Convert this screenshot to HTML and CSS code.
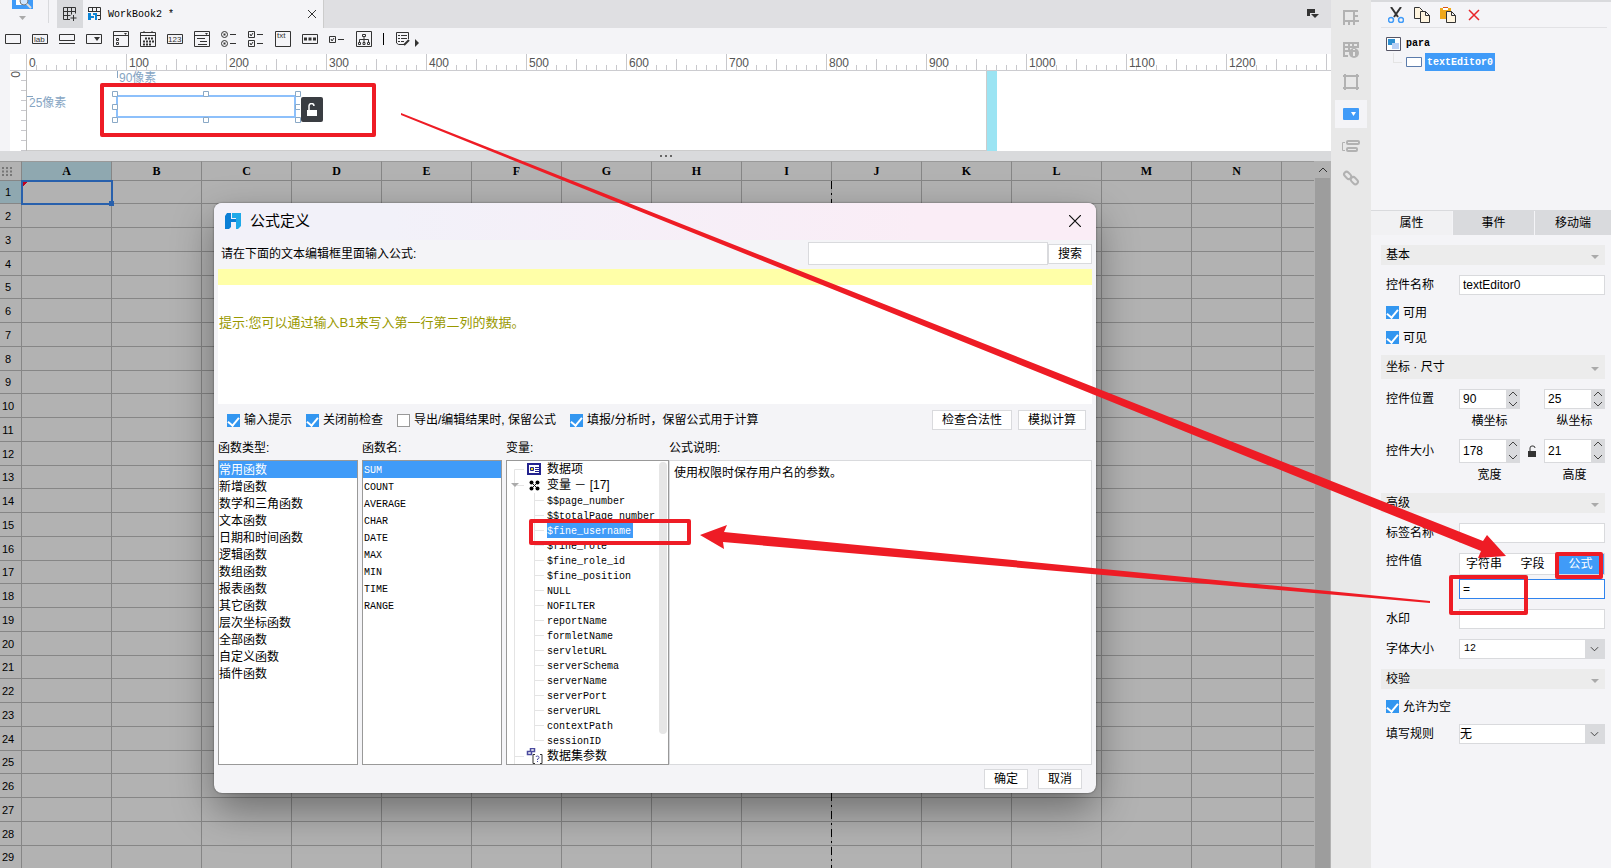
FILE: index.html
```html
<!DOCTYPE html>
<html lang="zh-CN">
<head>
	<meta charset="UTF-8">
	<title>WorkBook2</title>

	<link rel="stylesheet" href="styles.css">
</head>
<body>

	<div class="app">

		<main class="main">
			<div class="topbar">
				<div class="preview">
					<button class="preview-btn" aria-label="预览">
						<svg width="21" height="9" viewBox="0 0 21 9"><rect width="21" height="9" fill="#409bf8"/><rect x="4" width="11" height="5" fill="#fff"/><circle cx="12" cy="1" r="4" fill="#cfe6ff" stroke="#777" /><path d="M15 4l4 4" stroke="#ddd" stroke-width="2"/></svg>
						<svg width="7" height="4" viewBox="0 0 7 4"><path d="M0 0h7L3.500 4z" fill="#aaa"/></svg>
					</button>
				</div>
				<button class="new-tab" aria-label="新建">
					<svg width="14" height="14" viewBox="0 0 14 14" fill="none" stroke="#333"><path d="M7 12.500H.5V.5h12v6M.5 4.500h12M.5 8.500h7M4.500.5v12M8.500.5v7M10.500 8v6M7.500 11h6"/></svg>
				</button>
				<div class="tab">
					<svg width="14" height="14" viewBox="0 0 14 14" fill="none"><path d="M.5 5V.5h12v12H10M.5 4.500h12M4.500.5v4M8.500.5v4M9 8.500h4" stroke="#333"/><path d="M0 6h3v3h3v2H3v2H0zM5 6h4v7H7V8H5z" fill="#0a84d6"/></svg>
					<span class="tab-name">WorkBook2 *</span>
					<button class="tab-close" aria-label="关闭">
						<svg width="8" height="8" viewBox="0 0 8 8"><path d="M0 0l8 8M8 0L0 8" stroke="#333"/></svg>
					</button>
				</div>
				<button class="tab-list" aria-label="标签列表">
					<svg width="12" height="10" viewBox="0 0 12 10"><path d="M0 0h8v4H3v3H0z" fill="#333"/><path d="M4 5h8L8 9z" fill="#333"/></svg>
				</button>
			</div>

			<div class="toolbar">
				<svg viewBox="0 0 16 16"><path d="M.5 3.500h15v9H.5z"/></svg>
				<svg viewBox="0 0 16 16"><path d="M.5 3.500h15v9H.5z"/><text x="2" y="11">lab</text></svg>
				<svg viewBox="0 0 16 16"><path d="M.5 3.500h15v6H.5zM0 12.500h16"/></svg>
				<svg viewBox="0 0 16 16"><path d="M.5 3.500h15v9H.5z"/><path class="solid" d="M8 6h6l-3 4z"/></svg>
				<svg viewBox="0 0 16 16"><path d="M.5.5h15v15H.5zM.5 4.500h15M3.500 7.500h2v2h-2zM3.500 11.500h2v2h-2z"/><path class="solid" d="M11 2h3l-1.500 2z"/></svg>
				<svg viewBox="0 0 16 16"><path d="M.5 1.500h15v14H.5zM.5 4.500h15M4 0v2M12 0v2"/><path d="M5 7.500h9M3 10.500h11M3 13.500h8" stroke-width="2" stroke-dasharray="2 1"/></svg>
				<svg viewBox="0 0 16 16"><path d="M.5 3.500h15v9H.5z"/><text x="1" y="11">123</text></svg>
				<svg viewBox="0 0 16 16"><path d="M.5.5h15v15H.5zM.5 4.500h15M3 7.500h8M6 10.500h7M4 13.500h9"/><path class="solid" d="M11 2h3l-1.500 2z"/></svg>
				<svg viewBox="0 0 16 16"><circle cx="3.500" cy="3.500" r="3"/><circle cx="3.500" cy="12.500" r="3"/><path d="M9 3.500h6M9 12.500h6"/><path d="M2.500 3.500h2M2.500 12.500h2" stroke-width="2"/></svg>
				<svg viewBox="0 0 16 16"><path d="M.5.5h6v6h-6zM.5 9.500h6v6h-6zM9 3.500h6M9 12.500h6M2 3l1 2 2-3M2 12l1 2 2-3"/></svg>
				<svg viewBox="0 0 16 16"><path d="M.5.5h15v15H.5z"/><text x="2" y="7">txt</text></svg>
				<svg viewBox="0 0 16 16"><path d="M.5 3.500h15v9H.5z"/><path d="M2 8h12" stroke-width="3" stroke-dasharray="3 1.500"/></svg>
				<svg viewBox="0 0 16 16"><path d="M.5 5.500h6v6h-6zM9 8.500h6M2 8l1 2 2-3"/></svg>
				<svg viewBox="0 0 16 16"><path d="M.5.5h15v15H.5zM6.500 3.500h3v2h-3zM8 6v5M3.500 11V8.500h9V11M2.500 11.500h2v2h-2zM7 11.500h2v2H7zM11.500 11.500h2v2h-2z"/></svg>
				<span class="toolbar-sep"></span>
				<svg viewBox="0 0 16 16"><path d="M9 13.500H3.500L1.500 12V1.500h12V8M6 4.500h6M6 7.500h6M6 10.500h3M3 4.500h2M3 7.500h2M3 10.500h2"/><path d="M9 14l5-5" stroke-width="2"/></svg>
				<svg class="more" viewBox="0 0 4 8"><path class="solid" d="M0 0l4 4-4 4z"/></svg>
			</div>

			<div class="designer">
				<div class="ruler">
					<span>0</span><span>100</span><span>200</span><span>300</span><span>400</span><span>500</span><span>600</span><span>700</span><span>800</span><span>900</span><span>1000</span><span>1100</span><span>1200</span>
				</div>
				<div class="designer-body">
					<div class="ruler-left"><span>0</span></div>
					<div class="canvas">
						<div class="canvas-form"></div>
						<div class="canvas-edge"></div>
						<span class="guide guide-x">90像素</span>
						<span class="guide guide-y">25像素</span>
						<svg class="widget" width="190" height="33" viewBox="0 0 190 33" fill="#fff">
							<rect x="5" y="6" width="178" height="21" stroke="#8dc0fb" stroke-width="2"/>
							<g stroke="#8aa9c6">
								<path d="M.5 1.500h5v5h-5zM91.500 1.500h5v5h-5zM183.500 1.500h5v5h-5zM.5 14.500h5v5h-5zM.5 27.500h5v5h-5zM91.500 27.500h5v5h-5zM183.500 27.500h5v5h-5z"/>
								<path d="M188 14.500h-4.500v5h4.500"/>
							</g>
						</svg>
						<button class="lock" aria-label="锁定">
							<svg width="10" height="14" viewBox="0 0 10 14"><path d="M0 7h10v6H0z" fill="#fff"/><path d="M2 7V3a2.500 2.500 0 0 1 5 0" fill="none" stroke="#fff" stroke-width="1.500"/></svg>
						</button>
					</div>
				</div>
			</div>

			<div class="splitter">
				<svg width="12" height="2" viewBox="0 0 12 2"><path d="M0 1h2M5 1h2M10 1h2" stroke="#666" stroke-width="2"/></svg>
			</div>

			<div class="sheet">
				<div class="sheet-view">
					<table class="grid">
						<thead>
							<tr><th class="corner" aria-label="全选"><svg width="11" height="9" viewBox="0 0 11 9"><path d="M0 1h11M0 4.500h11M0 8h11" stroke="#777" stroke-width="2" stroke-dasharray="2 2"/></svg></th></tr>
						</thead>
						<tbody></tbody>
					</table>
					<div class="page-break"></div>
					<div class="selection"></div>
				</div>
				<div class="scrollbar">
					<button aria-label="向上滚动"><svg width="10" height="6" viewBox="0 0 10 6"><path d="M1 5l4-4 4 4" fill="none" stroke="#333"/></svg></button>
					<div class="scrollbar-thumb"></div>
				</div>
			</div>
		</main>

		<nav class="strip">
			<button aria-label="单元格元素"><svg viewBox="0 0 16 16"><path d="M1 15V1h14M15 6h-4v5H6v4M1 11h5M11 1v5M11 11h5M11 11v4" /></svg></button>
			<button aria-label="单元格属性"><svg viewBox="0 0 16 16"><path d="M5 14H1V1h14v5M1 5h14M6 1v8M1 9h6M10 1v4"/><circle cx="11" cy="11" r="5" class="solid"/><path d="M11 10v4M11 7v1" stroke="#e8e8e8"/></svg></button>
			<button aria-label="悬浮元素"><svg viewBox="0 0 16 16"><path d="M2 0v16M14 0v16M0 2h16M0 14h16"/></svg></button>
			<button class="active" aria-label="控件设置"><svg viewBox="0 0 16 16"><rect y="2" width="16" height="12" rx="1" fill="#409bf8" stroke="none"/><path d="M8 6h5l-2.500 4z" fill="#fff" stroke="none"/></svg></button>
			<button aria-label="条件属性"><svg viewBox="0 0 16 16"><path d="M2 4.500H-.5v8H2" stroke-width="1"/><rect x="4" y="3" width="12" height="3" rx="1"/><rect x="4" y="10" width="10" height="3" rx="1"/></svg></button>
			<button aria-label="超级链接"><svg viewBox="0 0 16 16"><rect x="-4" y="-2" width="8" height="5" rx="2.500" transform="translate(5 5) rotate(45)"/><rect x="-4" y="-3" width="8" height="5" rx="2.500" transform="translate(11 11) rotate(45)"/></svg></button>
		</nav>

		<aside class="panel">
			<div class="panel-tools">
				<button aria-label="剪切"><svg width="16" height="16" viewBox="0 0 16 16" fill="none"><path d="M3 0l7 10M13 0L6 10" stroke="#333" stroke-width="2"/><circle cx="3" cy="13" r="2.500" stroke="#409bf8" stroke-width="1.500"/><circle cx="13" cy="13" r="2.500" stroke="#409bf8" stroke-width="1.500"/></svg></button>
				<button aria-label="复制"><svg width="16" height="16" viewBox="0 0 16 16" fill="#fff5e0" stroke="#333"><path d="M.5.500h5l3 3v8h-8z"/><path d="M6.500 4.500h5l4 4v7h-9zM11.500 4.500v4h4"/></svg></button>
				<button aria-label="粘贴"><svg width="16" height="16" viewBox="0 0 16 16"><path d="M0 1h11v11H0z" fill="#f0a818"/><path d="M3 0h5v3H3z" fill="#fff"/><path d="M3 0h5v1H3z" fill="#d9541e"/><path d="M6.500 4.500h5l4 4v7h-9zM11.500 4.500v4h4" fill="#fff5e0" stroke="#333"/></svg></button>
				<button aria-label="删除"><svg width="16" height="16" viewBox="0 0 16 16"><path d="M3 3l10 10M13 3L3 13" stroke="#e8262a" stroke-width="1.500"/></svg></button>
			</div>

			<ul class="widgets">
				<li>
					<svg width="15" height="14" viewBox="0 0 15 14"><path d="M.5.500h14v13H.5z" fill="#fff" stroke="#556"/><path d="M2 2h7v6H2z" fill="#2d8fd0"/><path d="M6 6h7v6H6z" fill="#b9d0f5"/></svg>
					<span>para</span>
				</li>
				<li class="child">
					<svg width="16" height="10" viewBox="0 0 16 10"><path d="M.5.500h15v9H.5z" fill="#fff" stroke="#5b7bab"/></svg>
					<span class="selected">textEditor0</span>
				</li>
			</ul>

			<div class="panel-tabs">
				<button class="active">属性</button>
				<button>事件</button>
				<button>移动端</button>
			</div>

			<form class="props">
				<h2>基本 <svg width="8" height="4" viewBox="0 0 8 4"><path d="M0 0h8L4 4z"/></svg></h2>
				<div class="prop">
					<label for="name">控件名称</label>
					<input type="text" id="name" value="textEditor0">
				</div>
				<label class="check"><input type="checkbox" checked>可用</label>
				<label class="check"><input type="checkbox" checked>可见</label>

				<h2 class="tall">坐标 · 尺寸 <svg width="8" height="4" viewBox="0 0 8 4"><path d="M0 0h8L4 4z"/></svg></h2>
				<div class="prop pair">
					<label for="left">控件位置</label>
					<div class="spinner">
						<input type="text" id="left" value="90">
						<svg viewBox="0 0 14 20"><path d="M3 7l4-4 4 4M3 13l4 4 4-4"/></svg>
					</div>
					<span></span>
					<div class="spinner">
						<input type="text" aria-label="纵坐标" value="25">
						<svg viewBox="0 0 14 20"><path d="M3 7l4-4 4 4M3 13l4 4 4-4"/></svg>
					</div>
					<span class="caption first">横坐标</span>
					<span class="caption last">纵坐标</span>
				</div>
				<div class="prop pair tall">
					<label for="width">控件大小</label>
					<div class="spinner">
						<input type="text" id="width" value="178">
						<svg viewBox="0 0 14 20"><path d="M3 5l4-4 4 4M3 14l4 4 4-4"/></svg>
					</div>
					<svg class="ratio" width="9" height="12" viewBox="0 0 9 12"><path d="M0 6h8v6H0z" fill="#333"/><path d="M2 6V3q0-2 2-2h1q2 0 2 2" fill="none" stroke="#333"/></svg>
					<div class="spinner">
						<input type="text" aria-label="高度" value="21">
						<svg viewBox="0 0 14 20"><path d="M3 5l4-4 4 4M3 14l4 4 4-4"/></svg>
					</div>
					<span class="caption first">宽度</span>
					<span class="caption last">高度</span>
				</div>

				<h2>高级 <svg width="8" height="4" viewBox="0 0 8 4"><path d="M0 0h8L4 4z"/></svg></h2>
				<div class="prop">
					<label for="label">标签名称</label>
					<input type="text" id="label">
				</div>
				<div class="prop value">
					<label for="value">控件值</label>
					<div class="segments">
						<button type="button">字符串</button>
						<button type="button">字段</button>
						<button type="button" class="active">公式</button>
					</div>
					<input type="text" id="value" class="focused" value="=">
				</div>
				<div class="prop">
					<label for="watermark">水印</label>
					<input type="text" id="watermark">
				</div>
				<div class="prop">
					<label for="size">字体大小</label>
					<div class="dropdown">
						<select id="size" class="mono"><option>12</option></select>
						<svg viewBox="0 0 20 20"><path d="M6 8l4 4 4-4"/></svg>
					</div>
				</div>

				<h2>校验 <svg width="8" height="4" viewBox="0 0 8 4"><path d="M0 0h8L4 4z"/></svg></h2>
				<label class="check"><input type="checkbox" checked>允许为空</label>
				<div class="prop">
					<label for="rule">填写规则</label>
					<div class="dropdown">
						<select id="rule"><option>无</option></select>
						<svg viewBox="0 0 20 20"><path d="M6 8l4 4 4-4"/></svg>
					</div>
				</div>
			</form>
		</aside>
	</div>

	<div class="dialog" role="dialog" aria-labelledby="dialog-title">
		<div class="dialog-title">
			<svg width="16" height="16" viewBox="0 0 16 16"><path d="M2 0h4v6h5v3H6v5l-2 2H0V3z" fill="#0a7fd6"/><path d="M7 0h9v13l-3 3h-2V5H7z" fill="#1fa9e8"/></svg>
			<span id="dialog-title">公式定义</span>
			<button aria-label="关闭"><svg width="12" height="12" viewBox="0 0 12 12"><path d="M0 0l12 12M12 0L0 12" stroke="#111" stroke-width="1.200"/></svg></button>
		</div>

		<div class="search">
			<label for="search">请在下面的文本编辑框里面输入公式:</label>
			<input type="text" id="search">
			<button class="btn">搜索</button>
		</div>

		<div class="editor">
			<div class="editor-line"></div>
			<p>提示:您可以通过输入B1来写入第一行第二列的数据。</p>
		</div>

		<div class="options">
			<label class="check"><input type="checkbox" checked>输入提示</label>
			<label class="check"><input type="checkbox" checked>关闭前检查</label>
			<label class="check"><input type="checkbox">导出/编辑结果时, 保留公式</label>
			<label class="check"><input type="checkbox" checked>填报/分析时，保留公式用于计算</label>
			<button class="btn check-btn">检查合法性</button>
			<button class="btn">模拟计算</button>
		</div>

		<div class="columns">
			<section>
				<h3>函数类型:</h3>
				<ul class="list">
					<li class="selected">常用函数</li>
					<li>新增函数</li>
					<li>数学和三角函数</li>
					<li>文本函数</li>
					<li>日期和时间函数</li>
					<li>逻辑函数</li>
					<li>数组函数</li>
					<li>报表函数</li>
					<li>其它函数</li>
					<li>层次坐标函数</li>
					<li>全部函数</li>
					<li>自定义函数</li>
					<li>插件函数</li>
				</ul>
			</section>
			<section>
				<h3>函数名:</h3>
				<ul class="list mono">
					<li class="selected">SUM</li>
					<li>COUNT</li>
					<li>AVERAGE</li>
					<li>CHAR</li>
					<li>DATE</li>
					<li>MAX</li>
					<li>MIN</li>
					<li>TIME</li>
					<li>RANGE</li>
				</ul>
			</section>
			<section>
				<h3>变量:</h3>
				<div class="tree">
					<div class="node">
						<svg width="40" height="16" viewBox="0 0 40 16"><path d="M7.500 16V8.500H17" stroke="#e4e4e4" fill="none"/><path d="M21 3h12v10H21z" fill="#fff" stroke="#23238e" stroke-width="2"/><path d="M23.500 6.500h3v3h-3z" fill="#e8d820" stroke="#23238e"/><path d="M28 6.500h4M28 8.500h4M28 10.500h4" stroke="#23238e"/></svg>
						<span>数据项</span>
					</div>
					<div class="node">
						<svg width="40" height="16" viewBox="0 0 40 16"><path d="M7.500 0v16M10 8.500h7" stroke="#e4e4e4"/><path d="M4 6h8L8 10z" fill="#aaa"/><path d="M24 5l7 7M31 5l-7 7" stroke="#111"/><circle cx="24.500" cy="5.500" r="2"/><circle cx="30.500" cy="5.500" r="2"/><circle cx="24.500" cy="11.500" r="2"/><circle cx="30.500" cy="11.500" r="2"/></svg>
						<span>变量 － [17]</span>
					</div>
					<ul class="leaves mono">
						<li><span>$$page_number</span></li>
						<li><span>$$totalPage_number</span></li>
						<li><span class="selected">$fine_username</span></li>
						<li><span>$fine_role</span></li>
						<li><span>$fine_role_id</span></li>
						<li><span>$fine_position</span></li>
						<li><span>NULL</span></li>
						<li><span>NOFILTER</span></li>
						<li><span>reportName</span></li>
						<li><span>formletName</span></li>
						<li><span>servletURL</span></li>
						<li><span>serverSchema</span></li>
						<li><span>serverName</span></li>
						<li><span>serverPort</span></li>
						<li><span>serverURL</span></li>
						<li><span>contextPath</span></li>
						<li><span>sessionID</span></li>
					</ul>
					<div class="node">
						<svg width="40" height="16" viewBox="0 0 40 16" fill="none"><path d="M7.500 0v16M8 8.500h9" stroke="#e4e4e4"/><path d="M23.500.500h4v3h-4zM20.500 3.500h4v3h-4z" stroke="#4a4a9e" stroke-width="1.500"/><path d="M28 6.500h-2v9h2M33 6.500h2v9h-2" stroke="#333"/><path d="M29 9q0-1 1.500-1t1.500 1.500-1.500 1.500v1M30.500 13v1" stroke="#4a4a9e"/></svg>
						<span>数据集参数</span>
					</div>
					<div class="tree-scroll"></div>
				</div>
			</section>
			<section>
				<h3>公式说明:</h3>
				<div class="description">使用权限时保存用户名的参数。</div>
			</section>
		</div>

		<div class="dialog-footer">
			<button class="btn">确定</button>
			<button class="btn">取消</button>
		</div>
	</div>

	<svg class="marks">
		<g fill="none" stroke="#ee1c25" stroke-width="4" stroke-linejoin="round">
			<rect x="102" y="85" width="272" height="50"/>
			<rect x="531" y="521" width="158" height="22"/>
			<rect x="1451" y="577" width="75" height="36"/>
			<rect x="1557" y="554" width="44" height="23"/>
		</g>
		<g fill="#ee1c25">
			<path d="M401 113L1483 541L1487 535L1506 556L1478 558L1481 551L401 115z"/>
			<path d="M1430 603L930 560L723 542L724 549L700 535L727 525L724 532L930 552L1430 601z"/>
		</g>
	</svg>

	<script>

		const columns = 'ABCDEFGHIJKLMN'.split('');
		const headRow = document.querySelector('.grid thead tr');
		const body = document.querySelector('.grid tbody');

		columns.concat('').forEach(name => {
			const th = document.createElement('th');
			th.textContent = name;
			if (name === 'A') th.className = 'current';
			headRow.appendChild(th);
		});

		for (let i = 1; i <= 29; i++) {
			const row = body.insertRow();
			const th = document.createElement('th');
			th.textContent = i;
			if (i === 1) th.className = 'current';
			row.appendChild(th);
			for (let j = 0; j <= columns.length; j++) row.insertCell();
		}

	</script>

</body>
</html>
```

FILE: styles.css
```css
* {
	box-sizing: border-box;
}

body {
	margin: 0;
	height: 100vh;
	overflow: hidden;
	position: relative;
	background: #f4f4f7;
	color: #000;
	font: 12px/16px "Liberation Sans", "Noto Sans CJK SC", sans-serif;
}

button, input, select {
	font: inherit;
	color: inherit;
	margin: 0;
	padding: 0;
	border: 0;
	background: none;
}

ul, h2, h3, p {
	margin: 0;
	padding: 0;
	list-style: none;
	font-size: 12px;
	font-weight: normal;
}

svg {
	display: block;
	flex: none;
}

.mono {
	font-family: "Liberation Mono", monospace;
	font-size: 10px;
}

.selected {
	background: #409bf8;
	color: #fff;
}

.app {
	display: flex;
	height: 100%;
}

.main {
	flex: 1;
	min-width: 0;
	display: flex;
	flex-direction: column;
}

/* top bar */

.topbar {
	display: flex;
	height: 28px;
	background: #dfdfe2;
}

.preview {
	width: 57px;
	padding-left: 12px;
	background: #f4f4f7;
}

.preview-btn {
	display: flex;
	flex-direction: column;
	align-items: center;
	gap: 7px;
	height: 23px;
	padding-right: 15px;
	border-right: 1px solid #d9dadd;
}

.new-tab {
	width: 26px;
	padding: 0 6px;
	background: #d9dadd;
}

.tab {
	display: flex;
	align-items: center;
	gap: 6px;
	width: 241px;
	padding: 0 7px 0 5px;
	background: #f4f4f7;
	border-right: 1px solid #ccc;
}

.tab-name {
	flex: 1;
	padding-top: 2px;
	font-family: "Liberation Mono", monospace;
	font-size: 10px;
}

.tab-close {
	padding: 0;
}

.tab-list {
	margin-left: auto;
	padding: 0 12px;
}

.toolbar {
	display: flex;
	align-items: center;
	gap: 11px;
	height: 26px;
	padding: 0 5px 4px;
}

.toolbar svg {
	width: 16px;
	height: 16px;
	fill: none;
	stroke: #333;
}

.toolbar text {
	font: 8px "Liberation Sans", sans-serif;
	fill: #333;
	stroke: none;
}

.toolbar .solid {
	fill: #333;
	stroke: none;
}

.toolbar-sep {
	width: 1px;
	height: 12px;
	background: #000;
}

.toolbar .more {
	width: 4px;
	height: 8px;
	margin: 8px 0 0 -7px;
}

/* parameter pane */

.designer {
	padding-left: 10px;
	height: 97px;
}

.ruler {
	display: flex;
	height: 17px;
	padding-top: 1px;
	padding-left: 16px;
	overflow: hidden;
	border-bottom: 1px solid #ccccd0;
	background-color: #fff;
	background-image:
		repeating-linear-gradient(90deg, #c8c8cc 0 1px, transparent 1px 100px),
		repeating-linear-gradient(90deg, #c8c8cc 0 1px, transparent 1px 50px),
		repeating-linear-gradient(90deg, #c8c8cc 0 1px, transparent 1px 10px);
	background-size: 100% 16px, 100% 11px, 100% 5px;
	background-position: 16px 100%;
	background-repeat: no-repeat;
}

.ruler span {
	flex: none;
	width: 100px;
	padding-left: 3px;
	color: #555;
}

.designer-body {
	display: flex;
	height: 80px;
}

.ruler-left {
	width: 17px;
	border-right: 1px solid #bbb;
	background: #fff repeating-linear-gradient(180deg, transparent 0 9px, #c8c8cc 9px 10px) 100% 0 / 5px 100% no-repeat;
}

.ruler-left span {
	display: block;
	width: 10px;
	writing-mode: vertical-rl;
	line-height: 10px;
	color: #555;
}

.canvas {
	flex: 1;
	position: relative;
	display: flex;
	background: #fff;
}

.canvas-form {
	width: 960px;
	border-right: 1px solid #ccc;
	border-bottom: 1px solid #ccc;
}

.canvas-edge {
	width: 10px;
	background: #9be4f3;
}

.guide {
	position: absolute;
	color: #86a5c3;
	line-height: 14px;
}

.guide-x {
	left: 90px;
	top: 0;
	padding-left: 2px;
	background: linear-gradient(#86a5c3, #86a5c3) 0 0 / 1px 7px no-repeat;
}

.guide-y {
	left: 0;
	top: 25px;
	padding-left: 2px;
	background: linear-gradient(#86a5c3, #86a5c3) 0 0 / 6px 1px no-repeat;
}

.widget {
	position: absolute;
	left: 85px;
	top: 19px;
}

.lock {
	position: absolute;
	left: 274px;
	top: 26px;
	width: 22px;
	height: 25px;
	padding: 0 6px;
	border-radius: 2px;
	background: #3a3d42;
}

.splitter {
	display: flex;
	align-items: center;
	justify-content: center;
	height: 10px;
	background: #d9dadc;
}

/* spreadsheet */

.sheet {
	flex: 1;
	min-height: 0;
	display: flex;
	background: #b2b2b2;
}

.sheet-view {
	flex: 1;
	position: relative;
	overflow: hidden;
}

.grid {
	width: 100%;
	table-layout: fixed;
	border-collapse: separate;
	border-spacing: 0;
}

.grid th, .grid td {
	height: 24px;
	padding: 0;
	border-right: 1px solid #868686;
	border-bottom: 1px solid #868686;
	font-weight: normal;
	font-size: 11px;
	line-height: 16px;
}

.grid tbody tr:nth-child(4n+1) > * {
	height: 23px;
}

.grid tbody th {
	padding-right: 5px;
}

.grid thead th {
	width: 90px;
	height: 20px;
	border-top: 1px solid #999;
	font: bold 12px/16px "Liberation Serif", serif;
}

.grid thead .corner {
	width: 22px;
	padding-left: 2px;
}

.grid thead th:last-child {
	width: auto;
}

.grid tr > :last-child {
	border-right: 0;
}

.grid .current {
	background: #8fa8b0;
}

.page-break {
	position: absolute;
	left: 831px;
	top: 20px;
	bottom: 0;
	width: 1px;
	background: repeating-linear-gradient(180deg, #000 0 8px, #999 8px 12px, #000 12px 14px, #999 14px 18px);
}

.selection {
	position: absolute;
	left: 21px;
	top: 19px;
	width: 92px;
	height: 25px;
	border: 2px solid #2860ac;
	background: linear-gradient(135deg, #c00020 3px, transparent 3px);
}

.selection::after {
	content: "";
	position: absolute;
	right: -3px;
	bottom: -3px;
	width: 5px;
	height: 5px;
	background: #2860ac;
}

.scrollbar {
	display: flex;
	flex-direction: column;
	width: 17px;
	padding: 0 1px;
}

.scrollbar button {
	display: flex;
	align-items: center;
	justify-content: center;
	height: 17px;
}

.scrollbar-thumb {
	flex: 1;
	background: #9d9d9d;
}

/* icon strip */

.strip {
	display: flex;
	flex-direction: column;
	gap: 4px;
	width: 40px;
	padding: 4px;
	background: #e8e8e8;
}

.strip button {
	display: flex;
	align-items: center;
	justify-content: center;
	height: 28px;
}

.strip .active {
	background: #f4f4f7;
}

.strip svg {
	width: 16px;
	height: 16px;
	overflow: visible;
	fill: none;
	stroke: #b2b2b2;
	stroke-width: 2;
}

.strip .solid {
	fill: #b2b2b2;
	stroke: none;
}

/* right panel */

.panel {
	width: 240px;
	border-top: 2px solid #d9dadd;
	background: #f4f4f7;
}

.panel-tools {
	display: flex;
	gap: 10px;
	margin: 0 4px 0 10px;
	padding: 5px 7px 4px;
	border-bottom: 1px solid #e2e2e5;
}

.widgets {
	height: 182px;
	padding: 7px 15px;
	font: bold 10px/20px "Liberation Mono", monospace;
}

.widgets li {
	display: flex;
	align-items: center;
	gap: 5px;
	height: 18px;
}

.widgets .child {
	gap: 3px;
	padding-left: 20px;
	background: linear-gradient(#e4e4e4, #e4e4e4) 7px 9px / 9px 1px no-repeat,
		linear-gradient(#e4e4e4, #e4e4e4) 7px 0 / 1px 9px no-repeat;
}

.widgets .selected {
	height: 18px;
	padding: 0 2px;
}

.panel-tabs {
	display: grid;
	grid-template-columns: 81px 81px 1fr;
	gap: 1px;
	height: 25px;
	border-top: 1px solid #d9dadd;
}

.panel-tabs button {
	background: #d9dadd;
}

.panel-tabs .active {
	background: #f1f1f3;
}

.props {
	display: flex;
	flex-direction: column;
	gap: 10px;
	padding: 10px 6px 10px 10px;
}

.props h2 {
	display: flex;
	align-items: center;
	justify-content: space-between;
	height: 20px;
	padding: 0 6px 0 5px;
	background: #ececec;
}

.props .tall {
	height: 24px;
}

.props h2 svg {
	margin-top: 4px;
	fill: #aaa;
}

.prop {
	display: grid;
	grid-template-columns: 73px 1fr;
	grid-auto-rows: 20px;
	align-items: center;
	padding-left: 5px;
}

.prop input {
	width: 100%;
	min-width: 0;
	height: 20px;
	padding: 0 3px;
	border: 1px solid #d9dadd;
	background: #fff;
}

.prop.pair {
	grid-template-columns: 73px 1fr 24px 1fr;
}

.props .pair.tall {
	grid-template-rows: 24px 20px;
	height: 44px;
}

.spinner {
	display: flex;
	align-self: stretch;
}

.prop .spinner input {
	flex: 1;
	height: 100%;
	border-right: 0;
}

.spinner svg {
	width: 14px;
	height: 100%;
	background: #d9dadd;
	fill: none;
	stroke: #444;
}

.ratio {
	justify-self: center;
}

.caption {
	padding-top: 4px;
	text-align: center;
}

.caption.first {
	grid-column: 2;
}

.caption.last {
	grid-column: 4;
}

.prop.value {
	grid-template-rows: 22px 20px;
	row-gap: 4px;
}

.prop.value label {
	padding-bottom: 6px;
}

.segments {
	display: grid;
	grid-template-columns: 48px 49px 1fr;
	height: 22px;
	border: 1px solid #d9dadd;
	background: #fff;
}

.segments .active {
	background: #409bf8;
	color: #fff;
}

.prop .focused {
	grid-column: 2;
	border-color: #2f83ee;
}

.dropdown {
	display: flex;
	height: 20px;
	border: 1px solid #d9dadd;
	background: #fff;
}

.dropdown select {
	flex: 1;
	appearance: none;
}

.dropdown .mono {
	padding-left: 4px;
}

.dropdown svg {
	width: 19px;
	background: #d9dadd;
	fill: none;
	stroke: #333;
}

.check {
	display: flex;
	align-items: center;
	gap: 4px;
	height: 15px;
}

.props .check {
	padding-left: 5px;
}

.check input {
	appearance: none;
	display: flex;
	justify-content: center;
	width: 13px;
	height: 13px;
	border: 1px solid #999;
	background: #fff;
}

.check input:checked {
	border-color: #3296f0;
	background: #3296f0;
}

.check input:checked::before {
	content: "";
	width: 5px;
	height: 9px;
	border: solid #fff;
	border-width: 0 2px 2px 0;
	transform: rotate(40deg);
}

/* formula dialog */

.dialog {
	position: absolute;
	left: 214px;
	top: 203px;
	width: 882px;
	height: 590px;
	display: flex;
	flex-direction: column;
	overflow: hidden;
	border-radius: 8px;
	background: #f4f4f7;
	box-shadow: 0 0 2px rgba(0, 0, 0, .5), 0 16px 40px rgba(0, 0, 0, .4);
}

.dialog-title {
	display: flex;
	align-items: center;
	gap: 9px;
	height: 37px;
	padding: 0 15px 2px 11px;
	background: linear-gradient(90deg, #f2f1f9 20%, #faedf6 80%);
	font-size: 15px;
}

.dialog-title span {
	flex: 1;
}

.btn {
	height: 20px;
	padding: 0 9px;
	border: 1px solid #d9dadd;
	background: #fff;
}

.search {
	display: flex;
	align-items: center;
	height: 29px;
	padding: 0 4px 2px 7px;
}

.search input {
	width: 240px;
	height: 23px;
	margin-left: auto;
	padding: 0 4px;
	border: 1px solid #d9dadd;
	background: #fff;
}

.editor {
	height: 135px;
	margin: 0 4px;
	background: #fff;
	color: #999900;
}

.editor-line {
	height: 16px;
	margin-bottom: 30px;
	background: #ffffa8;
}

.editor p {
	padding-left: 1px;
	font-size: 13px;
}

.options {
	display: flex;
	align-items: center;
	gap: 14px;
	height: 34px;
	padding: 0 10px 2px 13px;
}

.options .check-btn {
	margin-left: auto;
	margin-right: -8px;
}

.columns {
	flex: 1;
	display: grid;
	grid-template-columns: 140px 140px 163px 1fr;
	column-gap: 4px;
	margin: 0 4px;
}

.columns section {
	display: flex;
	flex-direction: column;
}

.columns section:last-child {
	margin-left: -4px;
}

.columns h3 {
	height: 22px;
	line-height: 21px;
}

.list, .tree, .description {
	flex: 1;
	border: 1px solid #999;
	background: #fff;
}

.list li {
	height: 17px;
	line-height: 19px;
}

.list.mono {
	font-size: 10px;
}

.list.mono li {
	padding-left: 1px;
}

.tree {
	position: relative;
}

.node {
	display: flex;
	height: 16px;
	line-height: 17px;
}

.leaves {
	background: linear-gradient(#e4e4e4, #e4e4e4) 7px 0 / 1px 100% no-repeat,
		linear-gradient(#e4e4e4, #e4e4e4) 27px 0 / 1px 248px no-repeat;
}

.leaves.mono {
	font-size: 10px;
}

.leaves li {
	height: 15px;
	padding-left: 40px;
	line-height: 17px;
	background: linear-gradient(#e4e4e4, #e4e4e4) 28px 7px / 9px 1px no-repeat;
}

.leaves span {
	display: block;
	width: max-content;
	height: 15px;
	padding-right: 2px;
}

.tree-scroll {
	position: absolute;
	top: 1px;
	right: 1px;
	width: 8px;
	height: 272px;
	border-radius: 4px;
	background: #e6e6e6;
}

.description {
	padding: 4px;
	border-color: #d9dadd;
}

.dialog-footer {
	display: flex;
	justify-content: flex-end;
	gap: 10px;
	height: 28px;
	padding: 4px 14px 0;
}

.marks {
	position: absolute;
	left: 0;
	top: 0;
	width: 100%;
	height: 100%;
	pointer-events: none;
}
```
